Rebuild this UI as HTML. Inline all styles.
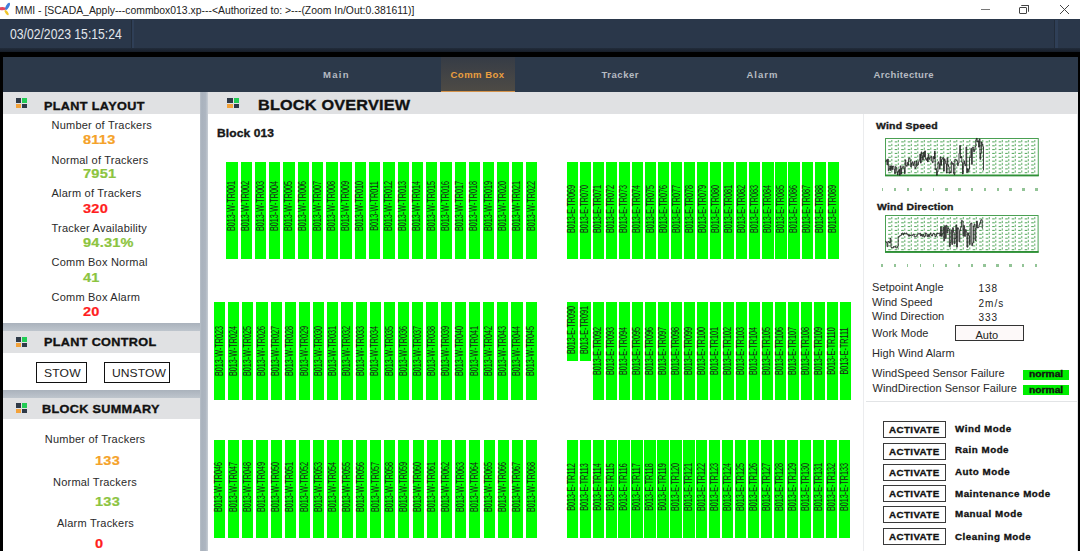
<!DOCTYPE html>
<html><head><meta charset="utf-8">
<style>
*{margin:0;padding:0;box-sizing:border-box}
html,body{width:1080px;height:551px;overflow:hidden;background:#fff;font-family:"Liberation Sans",sans-serif}
.a{position:absolute;display:block}
.bar{position:absolute;background:#00ff00}
.lab{position:absolute;width:0;height:0}
.lab span{position:absolute;left:-40px;top:-5px;width:80px;height:10px;font-size:10px;line-height:10px;text-align:center;color:#1a1a1a;transform:rotate(-90deg) scaleX(.72);white-space:nowrap}
.hdr{position:absolute;background:#e0e1e3}
.t{position:absolute;white-space:nowrap;line-height:1}
.lbl{font-size:11px;color:#2a2a2a;letter-spacing:.22px}
.val{font-size:13px;font-weight:bold;letter-spacing:.2px;transform:scaleX(1.12);transform-origin:0 0;-webkit-text-stroke:.2px currentColor}
.ttl{font-weight:bold;color:#111;-webkit-text-stroke:.35px #111}
.tab{font-size:9.5px;font-weight:bold;color:#b6bbc2}
.btn{position:absolute;border:1.3px solid #3a3a3a;background:#fff}
.act{font-size:8.5px;font-weight:bold;color:#111;letter-spacing:.35px;transform:scaleX(1.15);transform-origin:0 0;-webkit-text-stroke:.3px #111}
.mode{font-size:8.5px;font-weight:bold;color:#111;letter-spacing:.45px;transform:scaleX(1.15);transform-origin:0 0;-webkit-text-stroke:.3px #111}
.rp{font-size:11px;color:#2a2a2a;letter-spacing:.05px}
</style></head><body>

<div class="a" style="left:0;top:0;width:1080px;height:19px;background:#fff"></div>
<svg class="a" style="left:0;top:0" width="12" height="19" viewBox="0 0 12 19">
<ellipse cx="2.6" cy="8.6" rx="3.6" ry="1.7" fill="#e5485e"/>
<ellipse cx="7.6" cy="6.3" rx="1.6" ry="3.9" transform="rotate(28 7.6 6.3)" fill="#3f7fdc"/>
<ellipse cx="6.6" cy="12.6" rx="1.3" ry="3.1" transform="rotate(-35 6.6 12.6)" fill="#f0c52a"/>
</svg>
<div class="t" style="left:15px;top:5.5px;font-size:10.4px;color:#222">MMI - [SCADA_Apply---commbox013.xp---&lt;Authorized to: &gt;---(Zoom In/Out:0.381611)]</div>
<div class="a" style="left:981px;top:9px;width:9px;height:1px;background:#777"></div>
<div class="a" style="left:1019px;top:7px;width:8px;height:7px;border:1px solid #444;border-radius:1px"></div>
<div class="a" style="left:1021px;top:5px;width:8px;height:7px;border-top:1px solid #444;border-right:1px solid #444;border-radius:1px"></div>
<svg class="a" style="left:1059px;top:4px" width="11" height="11" viewBox="0 0 11 11"><path d="M1,1 L10,10 M10,1 L1,10" stroke="#444" stroke-width="1"/></svg>
<div class="a" style="left:0;top:19px;width:1080px;height:29px;background:#2a374a"></div>
<div class="a" style="left:130.5px;top:19.5px;width:1px;height:28px;background:#222c3a"></div><div class="a" style="left:131.5px;top:19.5px;width:2.5px;height:28px;background:#2f3f57"></div>
<div class="a" style="left:1054px;top:19.5px;width:1px;height:28px;background:#222c3a"></div><div class="a" style="left:1055px;top:19.5px;width:2.5px;height:28px;background:#2f3f57"></div>
<div class="t" style="left:10px;top:27.3px;font-size:14px;color:#e2e6ec;transform:scaleX(.87);transform-origin:0 0">03/02/2023 15:15:24</div>
<div class="a" style="left:0;top:47.5px;width:1080px;height:4.5px;background:linear-gradient(#222c3b,#161d28)"></div>
<div class="a" style="left:0;top:52px;width:1080px;height:4.5px;background:#000"></div>
<div class="a" style="left:0;top:52px;width:3.1px;height:499px;background:#000"></div>
<div class="a" style="left:1077.5px;top:52px;width:2.5px;height:499px;background:#000"></div>
<div class="a" style="left:3px;top:56.5px;width:1074.5px;height:35px;background:#2c394a"></div>
<div class="a" style="left:441px;top:56.5px;width:74px;height:35px;background:linear-gradient(#363c46,#4e4b45)"></div>
<div class="a" style="left:441px;top:90.5px;width:74px;height:1px;background:#d4924a"></div>
<div class="t tab" style="left:323px;top:70px;letter-spacing:1.27px">Main</div>
<div class="t tab" style="left:450.5px;top:70px;color:#eb9f3f;letter-spacing:.49px">Comm Box</div>
<div class="t tab" style="left:601.5px;top:70px;letter-spacing:.53px">Tracker</div>
<div class="t tab" style="left:746.5px;top:70px;letter-spacing:1px">Alarm</div>
<div class="t tab" style="left:873.5px;top:70px;letter-spacing:.38px">Architecture</div>
<div class="a" style="left:3px;top:91.5px;width:205px;height:459.5px;background:#bcc3cb"></div>
<div class="hdr" style="left:3px;top:91.5px;width:197px;height:22px"></div>
<div class="a" style="left:3px;top:113.5px;width:197px;height:209px;background:#fff"></div>
<div class="a" style="left:16px;top:98px;width:11px;height:10px"><i class="a" style="left:0;top:0;width:5.0px;height:4.5px;background:#2f3a48"></i><i class="a" style="left:6.0px;top:0;width:5.0px;height:4.5px;background:#22cc55"></i><i class="a" style="left:0;top:5.5px;width:5.0px;height:4.5px;background:#f3a23a"></i><i class="a" style="left:6.0px;top:5.5px;width:5.0px;height:4.5px;background:#2f3a48"></i></div>
<div class="t ttl" style="left:43.5px;top:101px;font-size:11.5px;letter-spacing:.32px;transform:scaleX(1.1);transform-origin:0 0">PLANT LAYOUT</div>
<div class="t lbl" style="left:51.5px;top:120.0px">Number of Trackers</div>
<div class="t val" style="left:83px;top:133.0px;color:#f5a229">8113</div>
<div class="t lbl" style="left:51.5px;top:154.5px">Normal of Trackers</div>
<div class="t val" style="left:83px;top:167.0px;color:#8cc440">7951</div>
<div class="t lbl" style="left:51.5px;top:188.1px">Alarm of Trackers</div>
<div class="t val" style="left:83px;top:201.7px;color:#ff1e1e">320</div>
<div class="t lbl" style="left:51.5px;top:222.6px">Tracker Availability</div>
<div class="t val" style="left:83px;top:236.3px;color:#8cc440">94.31%</div>
<div class="t lbl" style="left:51.5px;top:257.0px">Comm Box Normal</div>
<div class="t val" style="left:83px;top:270.9px;color:#8cc440">41</div>
<div class="t lbl" style="left:51.5px;top:291.5px">Comm Box Alarm</div>
<div class="t val" style="left:83px;top:305.2px;color:#ff1e1e">20</div>
<div class="a" style="left:3px;top:322.5px;width:197px;height:8px;background:linear-gradient(#aab2bc,#bec5cd)"></div>
<div class="a" style="left:3px;top:389.5px;width:197px;height:8px;background:linear-gradient(#aab2bc,#bec5cd)"></div>
<div class="hdr" style="left:3px;top:330.5px;width:197px;height:22px"></div>
<div class="a" style="left:3px;top:352.5px;width:197px;height:37px;background:#fff"></div>
<div class="a" style="left:16px;top:337px;width:11px;height:10px"><i class="a" style="left:0;top:0;width:5.0px;height:4.5px;background:#2f3a48"></i><i class="a" style="left:6.0px;top:0;width:5.0px;height:4.5px;background:#22cc55"></i><i class="a" style="left:0;top:5.5px;width:5.0px;height:4.5px;background:#f3a23a"></i><i class="a" style="left:6.0px;top:5.5px;width:5.0px;height:4.5px;background:#2f3a48"></i></div>
<div class="t ttl" style="left:43.5px;top:337px;font-size:11.5px;letter-spacing:.3px;transform:scaleX(1.1);transform-origin:0 0">PLANT CONTROL</div>
<div class="btn" style="left:35.5px;top:362.3px;width:51.4px;height:20.8px;border:1.8px solid #111"></div>
<div class="t" style="left:44px;top:368px;font-size:11px;color:#222;letter-spacing:.15px;transform:scaleX(1.1);transform-origin:0 0">STOW</div>
<div class="btn" style="left:104px;top:362.3px;width:66px;height:20.8px;border:1.8px solid #111"></div>
<div class="t" style="left:111.5px;top:368px;font-size:11px;color:#222;letter-spacing:.05px;transform:scaleX(1.1);transform-origin:0 0">UNSTOW</div>
<div class="hdr" style="left:3px;top:397.5px;width:197px;height:21.5px"></div>
<div class="a" style="left:3px;top:419px;width:197px;height:132px;background:#fff"></div>
<div class="a" style="left:16px;top:403px;width:11px;height:10px"><i class="a" style="left:0;top:0;width:5.0px;height:4.5px;background:#2f3a48"></i><i class="a" style="left:6.0px;top:0;width:5.0px;height:4.5px;background:#22cc55"></i><i class="a" style="left:0;top:5.5px;width:5.0px;height:4.5px;background:#f3a23a"></i><i class="a" style="left:6.0px;top:5.5px;width:5.0px;height:4.5px;background:#2f3a48"></i></div>
<div class="t ttl" style="left:41.5px;top:404px;font-size:11.5px;letter-spacing:.3px;transform:scaleX(1.1);transform-origin:0 0">BLOCK SUMMARY</div>
<div class="t lbl" style="left:44.8px;top:434.3px">Number of Trackers</div>
<div class="t val" style="left:95px;top:453.7px;color:#f5a229">133</div>
<div class="t lbl" style="left:53px;top:477px">Normal Trackers</div>
<div class="t val" style="left:95px;top:495.3px;color:#8cc440">133</div>
<div class="t lbl" style="left:57px;top:517.5px">Alarm Trackers</div>
<div class="t val" style="left:95.3px;top:537px;color:#ff1e1e">0</div>
<div class="a" style="left:200px;top:91.5px;width:8px;height:459.5px;background:linear-gradient(90deg,#b9c0c9,#a9b2bd 22%,#aeb6c1 70%,#c8ced5)"></div>
<div class="hdr" style="left:208px;top:91.5px;width:869.5px;height:22.3px"></div>
<div class="a" style="left:227px;top:98px;width:12px;height:10px"><i class="a" style="left:0;top:0;width:5.5px;height:4.5px;background:#2f3a48"></i><i class="a" style="left:6.5px;top:0;width:5.5px;height:4.5px;background:#22cc55"></i><i class="a" style="left:0;top:5.5px;width:5.5px;height:4.5px;background:#f3a23a"></i><i class="a" style="left:6.5px;top:5.5px;width:5.5px;height:4.5px;background:#2f3a48"></i></div>
<div class="t ttl" style="left:258px;top:97px;font-size:15.3px;letter-spacing:.2px;transform:scaleX(1.06);transform-origin:0 0">BLOCK OVERVIEW</div>
<div class="t ttl" style="left:216.7px;top:128.3px;font-size:11.8px;color:#1a1a1a;transform:scaleX(1.02);transform-origin:0 0;letter-spacing:.1px">Block 013</div>
<div class="bar" style="left:226.40px;top:161.60px;width:11.30px;height:97.70px"></div>
<div class="lab" style="left:232.05px;top:205.90px"><span>B013-W-TR001</span></div>
<div class="bar" style="left:240.66px;top:161.60px;width:11.30px;height:97.70px"></div>
<div class="lab" style="left:246.31px;top:205.90px"><span>B013-W-TR002</span></div>
<div class="bar" style="left:254.92px;top:161.60px;width:11.30px;height:97.70px"></div>
<div class="lab" style="left:260.57px;top:205.90px"><span>B013-W-TR003</span></div>
<div class="bar" style="left:269.18px;top:161.60px;width:11.30px;height:97.70px"></div>
<div class="lab" style="left:274.83px;top:205.90px"><span>B013-W-TR004</span></div>
<div class="bar" style="left:283.44px;top:161.60px;width:11.30px;height:97.70px"></div>
<div class="lab" style="left:289.09px;top:205.90px"><span>B013-W-TR005</span></div>
<div class="bar" style="left:297.70px;top:161.60px;width:11.30px;height:97.70px"></div>
<div class="lab" style="left:303.35px;top:205.90px"><span>B013-W-TR006</span></div>
<div class="bar" style="left:311.96px;top:161.60px;width:11.30px;height:97.70px"></div>
<div class="lab" style="left:317.61px;top:205.90px"><span>B013-W-TR007</span></div>
<div class="bar" style="left:326.22px;top:161.60px;width:11.30px;height:97.70px"></div>
<div class="lab" style="left:331.87px;top:205.90px"><span>B013-W-TR008</span></div>
<div class="bar" style="left:340.48px;top:161.60px;width:11.30px;height:97.70px"></div>
<div class="lab" style="left:346.13px;top:205.90px"><span>B013-W-TR009</span></div>
<div class="bar" style="left:354.74px;top:161.60px;width:11.30px;height:97.70px"></div>
<div class="lab" style="left:360.39px;top:205.90px"><span>B013-W-TR010</span></div>
<div class="bar" style="left:369.00px;top:161.60px;width:11.30px;height:97.70px"></div>
<div class="lab" style="left:374.65px;top:205.90px"><span>B013-W-TR011</span></div>
<div class="bar" style="left:383.26px;top:161.60px;width:11.30px;height:97.70px"></div>
<div class="lab" style="left:388.91px;top:205.90px"><span>B013-W-TR012</span></div>
<div class="bar" style="left:397.52px;top:161.60px;width:11.30px;height:97.70px"></div>
<div class="lab" style="left:403.17px;top:205.90px"><span>B013-W-TR013</span></div>
<div class="bar" style="left:411.78px;top:161.60px;width:11.30px;height:97.70px"></div>
<div class="lab" style="left:417.43px;top:205.90px"><span>B013-W-TR014</span></div>
<div class="bar" style="left:426.04px;top:161.60px;width:11.30px;height:97.70px"></div>
<div class="lab" style="left:431.69px;top:205.90px"><span>B013-W-TR015</span></div>
<div class="bar" style="left:440.30px;top:161.60px;width:11.30px;height:97.70px"></div>
<div class="lab" style="left:445.95px;top:205.90px"><span>B013-W-TR016</span></div>
<div class="bar" style="left:454.56px;top:161.60px;width:11.30px;height:97.70px"></div>
<div class="lab" style="left:460.21px;top:205.90px"><span>B013-W-TR017</span></div>
<div class="bar" style="left:468.82px;top:161.60px;width:11.30px;height:97.70px"></div>
<div class="lab" style="left:474.47px;top:205.90px"><span>B013-W-TR018</span></div>
<div class="bar" style="left:483.08px;top:161.60px;width:11.30px;height:97.70px"></div>
<div class="lab" style="left:488.73px;top:205.90px"><span>B013-W-TR019</span></div>
<div class="bar" style="left:497.34px;top:161.60px;width:11.30px;height:97.70px"></div>
<div class="lab" style="left:502.99px;top:205.90px"><span>B013-W-TR020</span></div>
<div class="bar" style="left:511.60px;top:161.60px;width:11.30px;height:97.70px"></div>
<div class="lab" style="left:517.25px;top:205.90px"><span>B013-W-TR021</span></div>
<div class="bar" style="left:525.86px;top:161.60px;width:11.30px;height:97.70px"></div>
<div class="lab" style="left:531.51px;top:205.90px"><span>B013-W-TR022</span></div>
<div class="bar" style="left:566.60px;top:161.60px;width:11.20px;height:97.70px"></div>
<div class="lab" style="left:572.20px;top:209.20px"><span>B013-E-TR069</span></div>
<div class="bar" style="left:579.65px;top:161.60px;width:11.20px;height:97.70px"></div>
<div class="lab" style="left:585.25px;top:209.20px"><span>B013-E-TR070</span></div>
<div class="bar" style="left:592.70px;top:161.60px;width:11.20px;height:97.70px"></div>
<div class="lab" style="left:598.30px;top:209.20px"><span>B013-E-TR071</span></div>
<div class="bar" style="left:605.75px;top:161.60px;width:11.20px;height:97.70px"></div>
<div class="lab" style="left:611.35px;top:209.20px"><span>B013-E-TR072</span></div>
<div class="bar" style="left:618.80px;top:161.60px;width:11.20px;height:97.70px"></div>
<div class="lab" style="left:624.40px;top:209.20px"><span>B013-E-TR073</span></div>
<div class="bar" style="left:631.85px;top:161.60px;width:11.20px;height:97.70px"></div>
<div class="lab" style="left:637.45px;top:209.20px"><span>B013-E-TR074</span></div>
<div class="bar" style="left:644.90px;top:161.60px;width:11.20px;height:97.70px"></div>
<div class="lab" style="left:650.50px;top:209.20px"><span>B013-E-TR075</span></div>
<div class="bar" style="left:657.95px;top:161.60px;width:11.20px;height:97.70px"></div>
<div class="lab" style="left:663.55px;top:209.20px"><span>B013-E-TR076</span></div>
<div class="bar" style="left:671.00px;top:161.60px;width:11.20px;height:97.70px"></div>
<div class="lab" style="left:676.60px;top:209.20px"><span>B013-E-TR077</span></div>
<div class="bar" style="left:684.05px;top:161.60px;width:11.20px;height:97.70px"></div>
<div class="lab" style="left:689.65px;top:209.20px"><span>B013-E-TR078</span></div>
<div class="bar" style="left:697.10px;top:161.60px;width:11.20px;height:97.70px"></div>
<div class="lab" style="left:702.70px;top:209.20px"><span>B013-E-TR079</span></div>
<div class="bar" style="left:710.15px;top:161.60px;width:11.20px;height:97.70px"></div>
<div class="lab" style="left:715.75px;top:209.20px"><span>B013-E-TR080</span></div>
<div class="bar" style="left:723.20px;top:161.60px;width:11.20px;height:97.70px"></div>
<div class="lab" style="left:728.80px;top:209.20px"><span>B013-E-TR081</span></div>
<div class="bar" style="left:736.25px;top:161.60px;width:11.20px;height:97.70px"></div>
<div class="lab" style="left:741.85px;top:209.20px"><span>B013-E-TR082</span></div>
<div class="bar" style="left:749.30px;top:161.60px;width:11.20px;height:97.70px"></div>
<div class="lab" style="left:754.90px;top:209.20px"><span>B013-E-TR083</span></div>
<div class="bar" style="left:762.35px;top:161.60px;width:11.20px;height:97.70px"></div>
<div class="lab" style="left:767.95px;top:209.20px"><span>B013-E-TR084</span></div>
<div class="bar" style="left:775.40px;top:161.60px;width:11.20px;height:97.70px"></div>
<div class="lab" style="left:781.00px;top:209.20px"><span>B013-E-TR085</span></div>
<div class="bar" style="left:788.45px;top:161.60px;width:11.20px;height:97.70px"></div>
<div class="lab" style="left:794.05px;top:209.20px"><span>B013-E-TR086</span></div>
<div class="bar" style="left:801.50px;top:161.60px;width:11.20px;height:97.70px"></div>
<div class="lab" style="left:807.10px;top:209.20px"><span>B013-E-TR087</span></div>
<div class="bar" style="left:814.55px;top:161.60px;width:11.20px;height:97.70px"></div>
<div class="lab" style="left:820.15px;top:209.20px"><span>B013-E-TR088</span></div>
<div class="bar" style="left:827.60px;top:161.60px;width:11.20px;height:97.70px"></div>
<div class="lab" style="left:833.20px;top:209.20px"><span>B013-E-TR089</span></div>
<div class="bar" style="left:213.90px;top:301.90px;width:11.20px;height:98.20px"></div>
<div class="lab" style="left:219.50px;top:350.50px"><span>B013-W-TR023</span></div>
<div class="bar" style="left:228.07px;top:301.90px;width:11.20px;height:98.20px"></div>
<div class="lab" style="left:233.67px;top:350.50px"><span>B013-W-TR024</span></div>
<div class="bar" style="left:242.24px;top:301.90px;width:11.20px;height:98.20px"></div>
<div class="lab" style="left:247.84px;top:350.50px"><span>B013-W-TR025</span></div>
<div class="bar" style="left:256.41px;top:301.90px;width:11.20px;height:98.20px"></div>
<div class="lab" style="left:262.01px;top:350.50px"><span>B013-W-TR026</span></div>
<div class="bar" style="left:270.58px;top:301.90px;width:11.20px;height:98.20px"></div>
<div class="lab" style="left:276.18px;top:350.50px"><span>B013-W-TR027</span></div>
<div class="bar" style="left:284.75px;top:301.90px;width:11.20px;height:98.20px"></div>
<div class="lab" style="left:290.35px;top:350.50px"><span>B013-W-TR028</span></div>
<div class="bar" style="left:298.92px;top:301.90px;width:11.20px;height:98.20px"></div>
<div class="lab" style="left:304.52px;top:350.50px"><span>B013-W-TR029</span></div>
<div class="bar" style="left:313.09px;top:301.90px;width:11.20px;height:98.20px"></div>
<div class="lab" style="left:318.69px;top:350.50px"><span>B013-W-TR030</span></div>
<div class="bar" style="left:327.26px;top:301.90px;width:11.20px;height:98.20px"></div>
<div class="lab" style="left:332.86px;top:350.50px"><span>B013-W-TR031</span></div>
<div class="bar" style="left:341.43px;top:301.90px;width:11.20px;height:98.20px"></div>
<div class="lab" style="left:347.03px;top:350.50px"><span>B013-W-TR032</span></div>
<div class="bar" style="left:355.60px;top:301.90px;width:11.20px;height:98.20px"></div>
<div class="lab" style="left:361.20px;top:350.50px"><span>B013-W-TR033</span></div>
<div class="bar" style="left:369.77px;top:301.90px;width:11.20px;height:98.20px"></div>
<div class="lab" style="left:375.37px;top:350.50px"><span>B013-W-TR034</span></div>
<div class="bar" style="left:383.94px;top:301.90px;width:11.20px;height:98.20px"></div>
<div class="lab" style="left:389.54px;top:350.50px"><span>B013-W-TR035</span></div>
<div class="bar" style="left:398.11px;top:301.90px;width:11.20px;height:98.20px"></div>
<div class="lab" style="left:403.71px;top:350.50px"><span>B013-W-TR036</span></div>
<div class="bar" style="left:412.28px;top:301.90px;width:11.20px;height:98.20px"></div>
<div class="lab" style="left:417.88px;top:350.50px"><span>B013-W-TR037</span></div>
<div class="bar" style="left:426.45px;top:301.90px;width:11.20px;height:98.20px"></div>
<div class="lab" style="left:432.05px;top:350.50px"><span>B013-W-TR038</span></div>
<div class="bar" style="left:440.62px;top:301.90px;width:11.20px;height:98.20px"></div>
<div class="lab" style="left:446.22px;top:350.50px"><span>B013-W-TR039</span></div>
<div class="bar" style="left:454.79px;top:301.90px;width:11.20px;height:98.20px"></div>
<div class="lab" style="left:460.39px;top:350.50px"><span>B013-W-TR040</span></div>
<div class="bar" style="left:468.96px;top:301.90px;width:11.20px;height:98.20px"></div>
<div class="lab" style="left:474.56px;top:350.50px"><span>B013-W-TR041</span></div>
<div class="bar" style="left:483.13px;top:301.90px;width:11.20px;height:98.20px"></div>
<div class="lab" style="left:488.73px;top:350.50px"><span>B013-W-TR042</span></div>
<div class="bar" style="left:497.30px;top:301.90px;width:11.20px;height:98.20px"></div>
<div class="lab" style="left:502.90px;top:350.50px"><span>B013-W-TR043</span></div>
<div class="bar" style="left:511.47px;top:301.90px;width:11.20px;height:98.20px"></div>
<div class="lab" style="left:517.07px;top:350.50px"><span>B013-W-TR044</span></div>
<div class="bar" style="left:525.64px;top:301.90px;width:11.20px;height:98.20px"></div>
<div class="lab" style="left:531.24px;top:350.50px"><span>B013-W-TR045</span></div>
<div class="bar" style="left:566.80px;top:301.90px;width:11.30px;height:59.10px"></div>
<div class="lab" style="left:572.45px;top:330.30px"><span>B013-E-TR090</span></div>
<div class="bar" style="left:579.79px;top:301.90px;width:11.30px;height:59.10px"></div>
<div class="lab" style="left:585.44px;top:330.30px"><span>B013-E-TR091</span></div>
<div class="bar" style="left:592.78px;top:301.90px;width:11.30px;height:98.20px"></div>
<div class="lab" style="left:598.43px;top:350.50px"><span>B013-E-TR092</span></div>
<div class="bar" style="left:605.77px;top:301.90px;width:11.30px;height:98.20px"></div>
<div class="lab" style="left:611.42px;top:350.50px"><span>B013-E-TR093</span></div>
<div class="bar" style="left:618.76px;top:301.90px;width:11.30px;height:98.20px"></div>
<div class="lab" style="left:624.41px;top:350.50px"><span>B013-E-TR094</span></div>
<div class="bar" style="left:631.75px;top:301.90px;width:11.30px;height:98.20px"></div>
<div class="lab" style="left:637.40px;top:350.50px"><span>B013-E-TR095</span></div>
<div class="bar" style="left:644.74px;top:301.90px;width:11.30px;height:98.20px"></div>
<div class="lab" style="left:650.39px;top:350.50px"><span>B013-E-TR096</span></div>
<div class="bar" style="left:657.73px;top:301.90px;width:11.30px;height:98.20px"></div>
<div class="lab" style="left:663.38px;top:350.50px"><span>B013-E-TR097</span></div>
<div class="bar" style="left:670.72px;top:301.90px;width:11.30px;height:98.20px"></div>
<div class="lab" style="left:676.37px;top:350.50px"><span>B013-E-TR098</span></div>
<div class="bar" style="left:683.71px;top:301.90px;width:11.30px;height:98.20px"></div>
<div class="lab" style="left:689.36px;top:350.50px"><span>B013-E-TR099</span></div>
<div class="bar" style="left:696.70px;top:301.90px;width:11.30px;height:98.20px"></div>
<div class="lab" style="left:702.35px;top:350.50px"><span>B013-E-TR100</span></div>
<div class="bar" style="left:709.69px;top:301.90px;width:11.30px;height:98.20px"></div>
<div class="lab" style="left:715.34px;top:350.50px"><span>B013-E-TR101</span></div>
<div class="bar" style="left:722.68px;top:301.90px;width:11.30px;height:98.20px"></div>
<div class="lab" style="left:728.33px;top:350.50px"><span>B013-E-TR102</span></div>
<div class="bar" style="left:735.67px;top:301.90px;width:11.30px;height:98.20px"></div>
<div class="lab" style="left:741.32px;top:350.50px"><span>B013-E-TR103</span></div>
<div class="bar" style="left:748.66px;top:301.90px;width:11.30px;height:98.20px"></div>
<div class="lab" style="left:754.31px;top:350.50px"><span>B013-E-TR104</span></div>
<div class="bar" style="left:761.65px;top:301.90px;width:11.30px;height:98.20px"></div>
<div class="lab" style="left:767.30px;top:350.50px"><span>B013-E-TR105</span></div>
<div class="bar" style="left:774.64px;top:301.90px;width:11.30px;height:98.20px"></div>
<div class="lab" style="left:780.29px;top:350.50px"><span>B013-E-TR106</span></div>
<div class="bar" style="left:787.63px;top:301.90px;width:11.30px;height:98.20px"></div>
<div class="lab" style="left:793.28px;top:350.50px"><span>B013-E-TR107</span></div>
<div class="bar" style="left:800.62px;top:301.90px;width:11.30px;height:98.20px"></div>
<div class="lab" style="left:806.27px;top:350.50px"><span>B013-E-TR108</span></div>
<div class="bar" style="left:813.61px;top:301.90px;width:11.30px;height:98.20px"></div>
<div class="lab" style="left:819.26px;top:350.50px"><span>B013-E-TR109</span></div>
<div class="bar" style="left:826.60px;top:301.90px;width:11.30px;height:98.20px"></div>
<div class="lab" style="left:832.25px;top:350.50px"><span>B013-E-TR110</span></div>
<div class="bar" style="left:839.59px;top:301.90px;width:11.30px;height:98.20px"></div>
<div class="lab" style="left:845.24px;top:350.50px"><span>B013-E-TR111</span></div>
<div class="bar" style="left:213.90px;top:440.30px;width:11.10px;height:97.80px"></div>
<div class="lab" style="left:219.45px;top:486.70px"><span>B013-W-TR046</span></div>
<div class="bar" style="left:228.09px;top:440.30px;width:11.10px;height:97.80px"></div>
<div class="lab" style="left:233.64px;top:486.70px"><span>B013-W-TR047</span></div>
<div class="bar" style="left:242.28px;top:440.30px;width:11.10px;height:97.80px"></div>
<div class="lab" style="left:247.83px;top:486.70px"><span>B013-W-TR048</span></div>
<div class="bar" style="left:256.47px;top:440.30px;width:11.10px;height:97.80px"></div>
<div class="lab" style="left:262.02px;top:486.70px"><span>B013-W-TR049</span></div>
<div class="bar" style="left:270.66px;top:440.30px;width:11.10px;height:97.80px"></div>
<div class="lab" style="left:276.21px;top:486.70px"><span>B013-W-TR050</span></div>
<div class="bar" style="left:284.85px;top:440.30px;width:11.10px;height:97.80px"></div>
<div class="lab" style="left:290.40px;top:486.70px"><span>B013-W-TR051</span></div>
<div class="bar" style="left:299.04px;top:440.30px;width:11.10px;height:97.80px"></div>
<div class="lab" style="left:304.59px;top:486.70px"><span>B013-W-TR052</span></div>
<div class="bar" style="left:313.23px;top:440.30px;width:11.10px;height:97.80px"></div>
<div class="lab" style="left:318.78px;top:486.70px"><span>B013-W-TR053</span></div>
<div class="bar" style="left:327.42px;top:440.30px;width:11.10px;height:97.80px"></div>
<div class="lab" style="left:332.97px;top:486.70px"><span>B013-W-TR054</span></div>
<div class="bar" style="left:341.61px;top:440.30px;width:11.10px;height:97.80px"></div>
<div class="lab" style="left:347.16px;top:486.70px"><span>B013-W-TR055</span></div>
<div class="bar" style="left:355.80px;top:440.30px;width:11.10px;height:97.80px"></div>
<div class="lab" style="left:361.35px;top:486.70px"><span>B013-W-TR056</span></div>
<div class="bar" style="left:369.99px;top:440.30px;width:11.10px;height:97.80px"></div>
<div class="lab" style="left:375.54px;top:486.70px"><span>B013-W-TR057</span></div>
<div class="bar" style="left:384.18px;top:440.30px;width:11.10px;height:97.80px"></div>
<div class="lab" style="left:389.73px;top:486.70px"><span>B013-W-TR058</span></div>
<div class="bar" style="left:398.37px;top:440.30px;width:11.10px;height:97.80px"></div>
<div class="lab" style="left:403.92px;top:486.70px"><span>B013-W-TR059</span></div>
<div class="bar" style="left:412.56px;top:440.30px;width:11.10px;height:97.80px"></div>
<div class="lab" style="left:418.11px;top:486.70px"><span>B013-W-TR060</span></div>
<div class="bar" style="left:426.75px;top:440.30px;width:11.10px;height:97.80px"></div>
<div class="lab" style="left:432.30px;top:486.70px"><span>B013-W-TR061</span></div>
<div class="bar" style="left:440.94px;top:440.30px;width:11.10px;height:97.80px"></div>
<div class="lab" style="left:446.49px;top:486.70px"><span>B013-W-TR062</span></div>
<div class="bar" style="left:455.13px;top:440.30px;width:11.10px;height:97.80px"></div>
<div class="lab" style="left:460.68px;top:486.70px"><span>B013-W-TR063</span></div>
<div class="bar" style="left:469.32px;top:440.30px;width:11.10px;height:97.80px"></div>
<div class="lab" style="left:474.87px;top:486.70px"><span>B013-W-TR064</span></div>
<div class="bar" style="left:483.51px;top:440.30px;width:11.10px;height:97.80px"></div>
<div class="lab" style="left:489.06px;top:486.70px"><span>B013-W-TR065</span></div>
<div class="bar" style="left:497.70px;top:440.30px;width:11.10px;height:97.80px"></div>
<div class="lab" style="left:503.25px;top:486.70px"><span>B013-W-TR066</span></div>
<div class="bar" style="left:511.89px;top:440.30px;width:11.10px;height:97.80px"></div>
<div class="lab" style="left:517.44px;top:486.70px"><span>B013-W-TR067</span></div>
<div class="bar" style="left:526.08px;top:440.30px;width:11.10px;height:97.80px"></div>
<div class="lab" style="left:531.63px;top:486.70px"><span>B013-W-TR068</span></div>
<div class="bar" style="left:566.60px;top:440.40px;width:11.20px;height:97.70px"></div>
<div class="lab" style="left:572.20px;top:486.50px"><span>B013-E-TR112</span></div>
<div class="bar" style="left:579.57px;top:440.40px;width:11.20px;height:97.70px"></div>
<div class="lab" style="left:585.17px;top:486.50px"><span>B013-E-TR113</span></div>
<div class="bar" style="left:592.54px;top:440.40px;width:11.20px;height:97.70px"></div>
<div class="lab" style="left:598.14px;top:486.50px"><span>B013-E-TR114</span></div>
<div class="bar" style="left:605.51px;top:440.40px;width:11.20px;height:97.70px"></div>
<div class="lab" style="left:611.11px;top:486.50px"><span>B013-E-TR115</span></div>
<div class="bar" style="left:618.48px;top:440.40px;width:11.20px;height:97.70px"></div>
<div class="lab" style="left:624.08px;top:486.50px"><span>B013-E-TR116</span></div>
<div class="bar" style="left:631.45px;top:440.40px;width:11.20px;height:97.70px"></div>
<div class="lab" style="left:637.05px;top:486.50px"><span>B013-E-TR117</span></div>
<div class="bar" style="left:644.42px;top:440.40px;width:11.20px;height:97.70px"></div>
<div class="lab" style="left:650.02px;top:486.50px"><span>B013-E-TR118</span></div>
<div class="bar" style="left:657.39px;top:440.40px;width:11.20px;height:97.70px"></div>
<div class="lab" style="left:662.99px;top:486.50px"><span>B013-E-TR119</span></div>
<div class="bar" style="left:670.36px;top:440.40px;width:11.20px;height:97.70px"></div>
<div class="lab" style="left:675.96px;top:486.50px"><span>B013-E-TR120</span></div>
<div class="bar" style="left:683.33px;top:440.40px;width:11.20px;height:97.70px"></div>
<div class="lab" style="left:688.93px;top:486.50px"><span>B013-E-TR121</span></div>
<div class="bar" style="left:696.30px;top:440.40px;width:11.20px;height:97.70px"></div>
<div class="lab" style="left:701.90px;top:486.50px"><span>B013-E-TR122</span></div>
<div class="bar" style="left:709.27px;top:440.40px;width:11.20px;height:97.70px"></div>
<div class="lab" style="left:714.87px;top:486.50px"><span>B013-E-TR123</span></div>
<div class="bar" style="left:722.24px;top:440.40px;width:11.20px;height:97.70px"></div>
<div class="lab" style="left:727.84px;top:486.50px"><span>B013-E-TR124</span></div>
<div class="bar" style="left:735.21px;top:440.40px;width:11.20px;height:97.70px"></div>
<div class="lab" style="left:740.81px;top:486.50px"><span>B013-E-TR125</span></div>
<div class="bar" style="left:748.18px;top:440.40px;width:11.20px;height:97.70px"></div>
<div class="lab" style="left:753.78px;top:486.50px"><span>B013-E-TR126</span></div>
<div class="bar" style="left:761.15px;top:440.40px;width:11.20px;height:97.70px"></div>
<div class="lab" style="left:766.75px;top:486.50px"><span>B013-E-TR127</span></div>
<div class="bar" style="left:774.12px;top:440.40px;width:11.20px;height:97.70px"></div>
<div class="lab" style="left:779.72px;top:486.50px"><span>B013-E-TR128</span></div>
<div class="bar" style="left:787.09px;top:440.40px;width:11.20px;height:97.70px"></div>
<div class="lab" style="left:792.69px;top:486.50px"><span>B013-E-TR129</span></div>
<div class="bar" style="left:800.06px;top:440.40px;width:11.20px;height:97.70px"></div>
<div class="lab" style="left:805.66px;top:486.50px"><span>B013-E-TR130</span></div>
<div class="bar" style="left:813.03px;top:440.40px;width:11.20px;height:97.70px"></div>
<div class="lab" style="left:818.63px;top:486.50px"><span>B013-E-TR131</span></div>
<div class="bar" style="left:826.00px;top:440.40px;width:11.20px;height:97.70px"></div>
<div class="lab" style="left:831.60px;top:486.50px"><span>B013-E-TR132</span></div>
<div class="bar" style="left:838.97px;top:440.40px;width:11.20px;height:97.70px"></div>
<div class="lab" style="left:844.57px;top:486.50px"><span>B013-E-TR133</span></div>
<div class="a" style="left:863px;top:113.8px;width:1px;height:437.2px;background:#ebecee"></div>
<div class="a" style="left:1077px;top:114px;width:1px;height:437px;background:#e4e6e8"></div>
<div class="t ttl" style="left:876px;top:121px;font-size:9.5px;color:#222;transform:scaleX(1.1);transform-origin:0 0;letter-spacing:.2px">Wind Speed</div>
<svg class="a" style="left:885px;top:137.6px;overflow:visible" width="153.8" height="38.2" viewBox="0 0 153.8 38.2">
<line x1="2" y1="3.9" x2="151.8" y2="3.9" stroke="#4ea556" stroke-width="1" stroke-dasharray="2.6 3.9" stroke-dashoffset="-1.2"/>
<line x1="2" y1="7.8" x2="151.8" y2="7.8" stroke="#4ea556" stroke-width="1" stroke-dasharray="2.6 3.9" stroke-dashoffset="-1.2"/>
<line x1="2" y1="11.6" x2="151.8" y2="11.6" stroke="#4ea556" stroke-width="1" stroke-dasharray="2.6 3.9" stroke-dashoffset="-1.2"/>
<line x1="2" y1="15.4" x2="151.8" y2="15.4" stroke="#4ea556" stroke-width="1" stroke-dasharray="2.6 3.9" stroke-dashoffset="-1.2"/>
<line x1="2" y1="19.3" x2="151.8" y2="19.3" stroke="#4ea556" stroke-width="1" stroke-dasharray="2.6 3.9" stroke-dashoffset="-1.2"/>
<line x1="2" y1="23.2" x2="151.8" y2="23.2" stroke="#4ea556" stroke-width="1" stroke-dasharray="2.6 3.9" stroke-dashoffset="-1.2"/>
<line x1="2" y1="27.0" x2="151.8" y2="27.0" stroke="#4ea556" stroke-width="1" stroke-dasharray="2.6 3.9" stroke-dashoffset="-1.2"/>
<line x1="2" y1="30.9" x2="151.8" y2="30.9" stroke="#4ea556" stroke-width="1" stroke-dasharray="2.6 3.9" stroke-dashoffset="-1.2"/>
<line x1="2" y1="34.7" x2="151.8" y2="34.7" stroke="#4ea556" stroke-width="1" stroke-dasharray="2.6 3.9" stroke-dashoffset="-1.2"/>
<line x1="6.8" y1="2" x2="6.8" y2="36.2" stroke="#4ea556" stroke-width="0.9" stroke-dasharray="2.2 1.6"/>
<line x1="13.3" y1="2" x2="13.3" y2="36.2" stroke="#4ea556" stroke-width="0.9" stroke-dasharray="2.2 1.6"/>
<line x1="19.8" y1="2" x2="19.8" y2="36.2" stroke="#4ea556" stroke-width="0.9" stroke-dasharray="2.2 1.6"/>
<line x1="26.3" y1="2" x2="26.3" y2="36.2" stroke="#4ea556" stroke-width="0.9" stroke-dasharray="2.2 1.6"/>
<line x1="32.8" y1="2" x2="32.8" y2="36.2" stroke="#4ea556" stroke-width="0.9" stroke-dasharray="2.2 1.6"/>
<line x1="39.3" y1="2" x2="39.3" y2="36.2" stroke="#4ea556" stroke-width="0.9" stroke-dasharray="2.2 1.6"/>
<line x1="45.8" y1="2" x2="45.8" y2="36.2" stroke="#4ea556" stroke-width="0.9" stroke-dasharray="2.2 1.6"/>
<line x1="52.3" y1="2" x2="52.3" y2="36.2" stroke="#4ea556" stroke-width="0.9" stroke-dasharray="2.2 1.6"/>
<line x1="58.8" y1="2" x2="58.8" y2="36.2" stroke="#4ea556" stroke-width="0.9" stroke-dasharray="2.2 1.6"/>
<line x1="65.3" y1="2" x2="65.3" y2="36.2" stroke="#4ea556" stroke-width="0.9" stroke-dasharray="2.2 1.6"/>
<line x1="71.8" y1="2" x2="71.8" y2="36.2" stroke="#4ea556" stroke-width="0.9" stroke-dasharray="2.2 1.6"/>
<line x1="78.3" y1="2" x2="78.3" y2="36.2" stroke="#4ea556" stroke-width="0.9" stroke-dasharray="2.2 1.6"/>
<line x1="84.8" y1="2" x2="84.8" y2="36.2" stroke="#4ea556" stroke-width="0.9" stroke-dasharray="2.2 1.6"/>
<line x1="91.3" y1="2" x2="91.3" y2="36.2" stroke="#4ea556" stroke-width="0.9" stroke-dasharray="2.2 1.6"/>
<line x1="97.8" y1="2" x2="97.8" y2="36.2" stroke="#4ea556" stroke-width="0.9" stroke-dasharray="2.2 1.6"/>
<line x1="104.3" y1="2" x2="104.3" y2="36.2" stroke="#4ea556" stroke-width="0.9" stroke-dasharray="2.2 1.6"/>
<line x1="110.8" y1="2" x2="110.8" y2="36.2" stroke="#4ea556" stroke-width="0.9" stroke-dasharray="2.2 1.6"/>
<line x1="117.3" y1="2" x2="117.3" y2="36.2" stroke="#4ea556" stroke-width="0.9" stroke-dasharray="2.2 1.6"/>
<line x1="123.8" y1="2" x2="123.8" y2="36.2" stroke="#4ea556" stroke-width="0.9" stroke-dasharray="2.2 1.6"/>
<line x1="130.3" y1="2" x2="130.3" y2="36.2" stroke="#4ea556" stroke-width="0.9" stroke-dasharray="2.2 1.6"/>
<line x1="136.8" y1="2" x2="136.8" y2="36.2" stroke="#4ea556" stroke-width="0.9" stroke-dasharray="2.2 1.6"/>
<line x1="143.3" y1="2" x2="143.3" y2="36.2" stroke="#4ea556" stroke-width="0.9" stroke-dasharray="2.2 1.6"/>
<line x1="149.8" y1="2" x2="149.8" y2="36.2" stroke="#4ea556" stroke-width="0.9" stroke-dasharray="2.2 1.6"/>
<rect x="0.5" y="0.5" width="152.8" height="37.2" fill="none" stroke="#4aa052" stroke-width="1"/>
<line x1="0" y1="37.300000000000004" x2="153.8" y2="37.300000000000004" stroke="#2f9037" stroke-width="1.8"/>
<polyline points="0.5,23.6 1.2,23.6 1.2,21.9 1.9,21.9 1.9,26.9 2.6,26.9 2.6,21.1 3.3,21.1 3.3,32.8 4.0,32.8 4.0,31.1 4.7,31.1 4.7,28.0 5.4,28.0 5.4,32.5 6.1,32.5 6.1,27.8 6.8,27.8 6.8,31.7 7.5,31.7 7.5,28.1 8.2,28.1 8.2,28.3 8.9,28.3 8.9,31.6 9.6,31.6 9.6,35.7 10.3,35.7 10.3,28.6 11.0,28.6 11.0,29.6 11.7,29.6 11.7,33.7 12.4,33.7 12.4,36.9 13.1,36.9 13.1,33.2 13.8,33.2 13.8,31.4 14.5,31.4 14.5,37.2 15.2,37.2 15.2,27.9 15.9,27.9 15.9,36.0 16.6,36.0 16.6,30.3 17.3,30.3 17.3,28.8 18.0,28.8 18.0,28.6 18.7,28.6 18.7,30.5 19.4,30.5 19.4,35.6 20.1,35.6 20.1,21.9 20.8,21.9 20.8,27.5 21.5,27.5 21.5,28.3 22.2,28.3 22.2,24.6 22.9,24.6 22.9,27.1 23.6,27.1 23.6,20.3 24.3,20.3 24.3,20.2 25.0,20.2 25.0,22.3 25.7,22.3 25.7,28.9 26.4,28.9 26.4,25.4 27.1,25.4 27.1,23.8 27.8,23.8 27.8,27.6 28.5,27.6 28.5,25.7 29.2,25.7 29.2,23.6 29.9,23.6 29.9,30.5 30.6,30.5 30.6,29.2 31.3,29.2 31.3,22.8 32.0,22.8 32.0,27.4 32.7,27.4 32.7,26.8 33.4,26.8 33.4,23.8 34.1,23.8 34.1,21.9 34.8,21.9 34.8,16.1 35.5,16.1 35.5,25.1 36.2,25.1 36.2,13.9 36.9,13.9 36.9,17.8 37.6,17.8 37.6,22.2 38.3,22.2 38.3,14.4 39.0,14.4 39.0,18.8 39.7,18.8 39.7,12.9 40.4,12.9 40.4,21.1 41.1,21.1 41.1,22.3 41.8,22.3 41.8,19.8 42.5,19.8 42.5,23.8 43.2,23.8 43.2,16.5 43.9,16.5 43.9,21.4 44.6,21.4 44.6,20.1 45.3,20.1 45.3,19.9 46.0,19.9 46.0,18.3 46.7,18.3 46.7,23.3 47.4,23.3 47.4,24.7 48.1,24.7 48.1,18.6 48.8,18.6 48.8,21.0 49.5,21.0 49.5,13.2 50.2,13.2 50.2,31.7 50.9,31.7 50.9,30.7 51.6,30.7 51.6,37.3 52.3,37.3 52.3,34.0 53.0,34.0 53.0,23.8 53.7,23.8 53.7,25.7 54.4,25.7 54.4,31.1 55.1,31.1 55.1,18.8 55.8,18.8 55.8,27.2 56.5,27.2 56.5,21.6 57.2,21.6 57.2,20.6 57.9,20.6 57.9,19.5 58.6,19.5 58.6,33.0 59.3,33.0 59.3,20.9 60.0,20.9 60.0,23.1 60.7,23.1 60.7,25.8 61.4,25.8 61.4,35.0 62.1,35.0 62.1,19.9 62.8,19.9 62.8,26.9 63.5,26.9 63.5,28.8 64.2,28.8 64.2,35.2 64.9,35.2 64.9,34.0 65.6,34.0 65.6,34.8 66.3,34.8 66.3,23.7 67.0,23.7 67.0,26.3 67.7,26.3 67.7,25.2 68.4,25.2 68.4,35.2 69.1,35.2 69.1,36.6 69.8,36.6 69.8,21.3 70.5,21.3 70.5,21.7 71.2,21.7 71.2,22.8 71.9,22.8 71.9,22.8 72.6,22.8 72.6,27.6 73.3,27.6 73.3,25.1 74.0,25.1 74.0,15.3 74.7,15.3 74.7,7.5 75.4,7.5 75.4,20.0 76.1,20.0 76.1,18.5 76.8,18.5 76.8,24.4 77.5,24.4 77.5,36.0 78.2,36.0 78.2,28.1 78.9,28.1 78.9,22.9 79.6,22.9 79.6,25.9 80.3,25.9 80.3,27.7 81.0,27.7 81.0,9.0 81.7,9.0 81.7,34.4 82.4,34.4 82.4,30.8 83.1,30.8 83.1,33.6 83.8,33.6 83.8,31.3 84.5,31.3 84.5,19.2 85.2,19.2 85.2,19.4 85.9,19.4 85.9,10.5 86.6,10.5 86.6,26.4 87.3,26.4 87.3,9.3 88.0,9.3 88.0,9.4 88.7,9.4 88.7,13.7 89.4,13.7 89.4,12.3 90.1,12.3 90.1,8.6 90.8,8.6 90.8,1.7 91.5,1.7 91.5,0.4 92.2,0.4 92.2,4.0 92.9,4.0 92.9,2.8 93.6,2.8 93.6,9.1 94.3,9.1 94.3,1.0 95.0,1.0 95.0,21.4 95.7,21.4 95.7,15.1 96.4,15.1 96.4,4.0 97.1,4.0 97.1,6.5 97.8,6.5 97.8,8.7 98.5,8.7 98.5,32.4" fill="none" stroke="#111" stroke-width="0.8" stroke-linejoin="miter"/>
</svg>
<div class="a" style="left:881.6px;top:188.0px;width:1.6px;height:3px;background:#93c497"></div>
<div class="a" style="left:894.4px;top:188.0px;width:1.6px;height:3px;background:#93c497"></div>
<div class="a" style="left:907.3px;top:188.0px;width:1.6px;height:3px;background:#93c497"></div>
<div class="a" style="left:920.1px;top:188.0px;width:1.6px;height:3px;background:#93c497"></div>
<div class="a" style="left:932.9px;top:188.0px;width:1.6px;height:3px;background:#93c497"></div>
<div class="a" style="left:945.2px;top:188.0px;width:2.6px;height:3px;background:#93c497"></div>
<div class="a" style="left:958.1px;top:188.0px;width:2.6px;height:3px;background:#93c497"></div>
<div class="a" style="left:970.9px;top:188.0px;width:2.6px;height:3px;background:#93c497"></div>
<div class="a" style="left:983.7px;top:188.0px;width:2.6px;height:3px;background:#93c497"></div>
<div class="a" style="left:996.6px;top:188.0px;width:2.6px;height:3px;background:#93c497"></div>
<div class="a" style="left:1009.4px;top:188.0px;width:2.6px;height:3px;background:#93c497"></div>
<div class="a" style="left:1022.2px;top:188.0px;width:2.6px;height:3px;background:#93c497"></div>
<div class="a" style="left:1035.1px;top:188.0px;width:2.6px;height:3px;background:#93c497"></div>
<div class="t ttl" style="left:876.5px;top:202px;font-size:9.5px;color:#222;transform:scaleX(1.1);transform-origin:0 0;letter-spacing:.2px">Wind Direction</div>
<svg class="a" style="left:884.6px;top:214.6px;overflow:visible" width="153.6" height="37.8" viewBox="0 0 153.6 37.8">
<line x1="2" y1="3.9" x2="151.6" y2="3.9" stroke="#4ea556" stroke-width="1" stroke-dasharray="2.6 3.9" stroke-dashoffset="-1.2"/>
<line x1="2" y1="7.8" x2="151.6" y2="7.8" stroke="#4ea556" stroke-width="1" stroke-dasharray="2.6 3.9" stroke-dashoffset="-1.2"/>
<line x1="2" y1="11.6" x2="151.6" y2="11.6" stroke="#4ea556" stroke-width="1" stroke-dasharray="2.6 3.9" stroke-dashoffset="-1.2"/>
<line x1="2" y1="15.4" x2="151.6" y2="15.4" stroke="#4ea556" stroke-width="1" stroke-dasharray="2.6 3.9" stroke-dashoffset="-1.2"/>
<line x1="2" y1="19.3" x2="151.6" y2="19.3" stroke="#4ea556" stroke-width="1" stroke-dasharray="2.6 3.9" stroke-dashoffset="-1.2"/>
<line x1="2" y1="23.2" x2="151.6" y2="23.2" stroke="#4ea556" stroke-width="1" stroke-dasharray="2.6 3.9" stroke-dashoffset="-1.2"/>
<line x1="2" y1="27.0" x2="151.6" y2="27.0" stroke="#4ea556" stroke-width="1" stroke-dasharray="2.6 3.9" stroke-dashoffset="-1.2"/>
<line x1="2" y1="30.9" x2="151.6" y2="30.9" stroke="#4ea556" stroke-width="1" stroke-dasharray="2.6 3.9" stroke-dashoffset="-1.2"/>
<line x1="2" y1="34.7" x2="151.6" y2="34.7" stroke="#4ea556" stroke-width="1" stroke-dasharray="2.6 3.9" stroke-dashoffset="-1.2"/>
<line x1="6.8" y1="2" x2="6.8" y2="35.8" stroke="#4ea556" stroke-width="0.9" stroke-dasharray="2.2 1.6"/>
<line x1="13.3" y1="2" x2="13.3" y2="35.8" stroke="#4ea556" stroke-width="0.9" stroke-dasharray="2.2 1.6"/>
<line x1="19.8" y1="2" x2="19.8" y2="35.8" stroke="#4ea556" stroke-width="0.9" stroke-dasharray="2.2 1.6"/>
<line x1="26.3" y1="2" x2="26.3" y2="35.8" stroke="#4ea556" stroke-width="0.9" stroke-dasharray="2.2 1.6"/>
<line x1="32.8" y1="2" x2="32.8" y2="35.8" stroke="#4ea556" stroke-width="0.9" stroke-dasharray="2.2 1.6"/>
<line x1="39.3" y1="2" x2="39.3" y2="35.8" stroke="#4ea556" stroke-width="0.9" stroke-dasharray="2.2 1.6"/>
<line x1="45.8" y1="2" x2="45.8" y2="35.8" stroke="#4ea556" stroke-width="0.9" stroke-dasharray="2.2 1.6"/>
<line x1="52.3" y1="2" x2="52.3" y2="35.8" stroke="#4ea556" stroke-width="0.9" stroke-dasharray="2.2 1.6"/>
<line x1="58.8" y1="2" x2="58.8" y2="35.8" stroke="#4ea556" stroke-width="0.9" stroke-dasharray="2.2 1.6"/>
<line x1="65.3" y1="2" x2="65.3" y2="35.8" stroke="#4ea556" stroke-width="0.9" stroke-dasharray="2.2 1.6"/>
<line x1="71.8" y1="2" x2="71.8" y2="35.8" stroke="#4ea556" stroke-width="0.9" stroke-dasharray="2.2 1.6"/>
<line x1="78.3" y1="2" x2="78.3" y2="35.8" stroke="#4ea556" stroke-width="0.9" stroke-dasharray="2.2 1.6"/>
<line x1="84.8" y1="2" x2="84.8" y2="35.8" stroke="#4ea556" stroke-width="0.9" stroke-dasharray="2.2 1.6"/>
<line x1="91.3" y1="2" x2="91.3" y2="35.8" stroke="#4ea556" stroke-width="0.9" stroke-dasharray="2.2 1.6"/>
<line x1="97.8" y1="2" x2="97.8" y2="35.8" stroke="#4ea556" stroke-width="0.9" stroke-dasharray="2.2 1.6"/>
<line x1="104.3" y1="2" x2="104.3" y2="35.8" stroke="#4ea556" stroke-width="0.9" stroke-dasharray="2.2 1.6"/>
<line x1="110.8" y1="2" x2="110.8" y2="35.8" stroke="#4ea556" stroke-width="0.9" stroke-dasharray="2.2 1.6"/>
<line x1="117.3" y1="2" x2="117.3" y2="35.8" stroke="#4ea556" stroke-width="0.9" stroke-dasharray="2.2 1.6"/>
<line x1="123.8" y1="2" x2="123.8" y2="35.8" stroke="#4ea556" stroke-width="0.9" stroke-dasharray="2.2 1.6"/>
<line x1="130.3" y1="2" x2="130.3" y2="35.8" stroke="#4ea556" stroke-width="0.9" stroke-dasharray="2.2 1.6"/>
<line x1="136.8" y1="2" x2="136.8" y2="35.8" stroke="#4ea556" stroke-width="0.9" stroke-dasharray="2.2 1.6"/>
<line x1="143.3" y1="2" x2="143.3" y2="35.8" stroke="#4ea556" stroke-width="0.9" stroke-dasharray="2.2 1.6"/>
<line x1="149.8" y1="2" x2="149.8" y2="35.8" stroke="#4ea556" stroke-width="0.9" stroke-dasharray="2.2 1.6"/>
<rect x="0.5" y="0.5" width="152.6" height="36.8" fill="none" stroke="#4aa052" stroke-width="1"/>
<line x1="0" y1="36.9" x2="153.6" y2="36.9" stroke="#2f9037" stroke-width="1.8"/>
<polyline points="0.4,26.4 1.2,26.4 1.2,27.6 2.0,27.6 2.0,31.6 2.8,31.6 2.8,26.5 3.6,26.5 3.6,27.0 4.4,27.0 4.4,27.9 5.2,27.9 5.2,23.4 6.0,23.4 6.0,32.4 6.8,32.4 6.8,32.7 7.6,32.7 7.6,33.0 8.4,33.0 8.4,31.6 9.2,31.6 9.2,32.0 10.0,32.0 10.0,31.6 10.8,31.6 10.8,33.0 11.6,33.0 11.6,32.8 12.4,32.8 12.4,31.5 13.2,31.5 13.2,21.8 14.0,21.8 14.0,21.8 14.8,21.8 14.8,20.5 15.6,20.5 15.6,20.4 16.4,20.4 16.4,18.5 17.2,18.5 17.2,18.0 18.0,18.0 18.0,20.0 18.8,20.0 18.8,18.1 19.6,18.1 19.6,18.7 20.4,18.7 20.4,18.9 21.2,18.9 21.2,18.0 22.0,18.0 22.0,19.8 22.8,19.8 22.8,19.7 23.6,19.7 23.6,21.3 24.4,21.3 24.4,20.0 25.2,20.0 25.2,20.5 26.0,20.5 26.0,19.9 26.8,19.9 26.8,20.5 27.6,20.5 27.6,19.7 28.4,19.7 28.4,19.0 29.2,19.0 29.2,21.9 30.0,21.9 30.0,21.9 30.8,21.9 30.8,21.3 31.6,21.3 31.6,20.7 32.4,20.7 32.4,19.2 33.2,19.2 33.2,18.8 34.0,18.8 34.0,19.1 34.8,19.1 34.8,18.2 35.6,18.2 35.6,21.0 36.4,21.0 36.4,19.5 37.2,19.5 37.2,21.3 38.0,21.3 38.0,19.4 38.8,19.4 38.8,21.7 39.6,21.7 39.6,21.3 40.4,21.3 40.4,17.9 41.2,17.9 41.2,18.7 42.0,18.7 42.0,21.5 42.8,21.5 42.8,19.8 43.6,19.8 43.6,21.8 44.4,21.8 44.4,19.5 45.2,19.5 45.2,18.2 46.0,18.2 46.0,20.4 46.8,20.4 46.8,21.0 47.6,21.0 47.6,19.0 48.4,19.0 48.4,18.2 49.2,18.2 49.2,19.2 50.0,19.2 50.0,21.8 50.8,21.8 50.8,20.9 51.6,20.9 51.6,18.4 52.4,18.4 52.4,18.9 53.2,18.9 53.2,18.3 54.0,18.3 54.0,18.1 54.8,18.1 54.8,21.1 55.6,21.1 55.6,11.8 56.4,11.8 56.4,21.4 57.2,21.4 57.2,18.6 58.0,18.6 58.0,12.2 58.8,12.2 58.8,25.7 59.6,25.7 59.6,10.7 60.4,10.7 60.4,23.5 61.2,23.5 61.2,10.3 62.0,10.3 62.0,17.9 62.8,17.9 62.8,12.7 63.6,12.7 63.6,14.1 64.4,14.1 64.4,31.7 65.2,31.7 65.2,27.5 66.0,27.5 66.0,15.0 66.8,15.0 66.8,29.5 67.6,29.5 67.6,12.7 68.4,12.7 68.4,17.3 69.2,17.3 69.2,28.8 70.0,28.8 70.0,23.4 70.8,23.4 70.8,9.9 71.6,9.9 71.6,32.1 72.4,32.1 72.4,12.7 73.2,12.7 73.2,13.9 74.0,13.9 74.0,26.7 74.8,26.7 74.8,15.6 75.6,15.6 75.6,12.3 76.4,12.3 76.4,5.6 77.2,5.6 77.2,6.1 78.0,6.1 78.0,20.9 78.8,20.9 78.8,10.7 79.6,10.7 79.6,21.4 80.4,21.4 80.4,14.6 81.2,14.6 81.2,17.0 82.0,17.0 82.0,32.2 82.8,32.2 82.8,17.9 83.6,17.9 83.6,20.6 84.4,20.6 84.4,29.4 85.2,29.4 85.2,8.9 86.0,8.9 86.0,8.0 86.8,8.0 86.8,30.7 87.6,30.7 87.6,27.9 88.4,27.9 88.4,10.9 89.2,10.9 89.2,9.1 90.0,9.1 90.0,25.6 90.8,25.6 90.8,12.9 91.6,12.9 91.6,6.2 92.4,6.2 92.4,13.0 93.2,13.0 93.2,12.3 94.0,12.3 94.0,9.8 94.8,9.8 94.8,8.2 95.6,8.2 95.6,5.3 96.4,5.3 96.4,4.7 97.2,4.7 97.2,13.1 98.0,13.1" fill="none" stroke="#111" stroke-width="0.8" stroke-linejoin="miter"/>
</svg>
<div class="a" style="left:881.2px;top:264.1px;width:1.6px;height:3px;background:#93c497"></div>
<div class="a" style="left:894.0px;top:264.1px;width:1.6px;height:3px;background:#93c497"></div>
<div class="a" style="left:906.9px;top:264.1px;width:1.6px;height:3px;background:#93c497"></div>
<div class="a" style="left:919.7px;top:264.1px;width:1.6px;height:3px;background:#93c497"></div>
<div class="a" style="left:932.5px;top:264.1px;width:1.6px;height:3px;background:#93c497"></div>
<div class="a" style="left:944.9px;top:264.1px;width:2.6px;height:3px;background:#93c497"></div>
<div class="a" style="left:957.7px;top:264.1px;width:2.6px;height:3px;background:#93c497"></div>
<div class="a" style="left:970.5px;top:264.1px;width:2.6px;height:3px;background:#93c497"></div>
<div class="a" style="left:983.3px;top:264.1px;width:2.6px;height:3px;background:#93c497"></div>
<div class="a" style="left:996.2px;top:264.1px;width:2.6px;height:3px;background:#93c497"></div>
<div class="a" style="left:1009.0px;top:264.1px;width:2.6px;height:3px;background:#93c497"></div>
<div class="a" style="left:1021.8px;top:264.1px;width:2.6px;height:3px;background:#93c497"></div>
<div class="a" style="left:1034.7px;top:264.1px;width:2.6px;height:3px;background:#93c497"></div>
<div class="t rp" style="left:872px;top:281.9px">Setpoint Angle</div>
<div class="t" style="left:978.5px;top:283.6px;font-size:10px;color:#222;letter-spacing:1px">138</div>
<div class="t rp" style="left:872px;top:297.0px">Wind Speed</div>
<div class="t" style="left:978.5px;top:298.7px;font-size:10px;color:#222;letter-spacing:1px">2m/s</div>
<div class="t rp" style="left:872px;top:311.3px">Wind Direction</div>
<div class="t" style="left:978.5px;top:313.0px;font-size:10px;color:#222;letter-spacing:1px">333</div>
<div class="t rp" style="left:872px;top:327.7px">Work Mode</div>
<div class="a" style="left:955px;top:325.2px;width:69px;height:15.5px;border:1.5px solid #333;background:#fdf9f9"></div>
<div class="t" style="left:975.5px;top:330px;font-size:11px;color:#222">Auto</div>
<div class="t rp" style="left:872px;top:348px">High Wind Alarm</div>
<div class="t rp" style="left:872px;top:368px">WindSpeed Sensor Failure</div>
<div class="t rp" style="left:872.5px;top:383.3px">WindDirection Sensor Failure</div>
<div class="a" style="left:1023.3px;top:369.9px;width:45.7px;height:9.9px;background:#00ee00"></div>
<div class="a" style="left:1023.3px;top:385.4px;width:45.7px;height:9.3px;background:#00ee00"></div>
<div class="t" style="left:1028.6px;top:370.3px;font-size:9px;font-weight:bold;color:#111;letter-spacing:0px;transform:scaleX(1.14);transform-origin:0 0;-webkit-text-stroke:.3px #111">normal</div>
<div class="t" style="left:1028.6px;top:385.6px;font-size:9px;font-weight:bold;color:#111;letter-spacing:0px;transform:scaleX(1.14);transform-origin:0 0;-webkit-text-stroke:.3px #111">normal</div>
<div class="a" style="left:866px;top:400.5px;width:211px;height:1px;background:#e2e4e6"></div>
<div class="btn" style="left:883px;top:421.1px;width:62.8px;height:17.3px"></div>
<div class="t act" style="left:889px;top:426.1px">ACTIVATE</div>
<div class="t mode" style="left:954.6px;top:424.9px">Wind Mode</div>
<div class="btn" style="left:883px;top:442.5px;width:62.8px;height:17.3px"></div>
<div class="t act" style="left:889px;top:447.5px">ACTIVATE</div>
<div class="t mode" style="left:954.6px;top:446.3px">Rain Mode</div>
<div class="btn" style="left:883px;top:463.5px;width:62.8px;height:17.3px"></div>
<div class="t act" style="left:889px;top:468.5px">ACTIVATE</div>
<div class="t mode" style="left:954.6px;top:467.8px">Auto Mode</div>
<div class="btn" style="left:883px;top:485.1px;width:62.8px;height:17.3px"></div>
<div class="t act" style="left:889px;top:490.1px">ACTIVATE</div>
<div class="t mode" style="left:954.6px;top:490.4px">Maintenance Mode</div>
<div class="btn" style="left:883px;top:506.1px;width:62.8px;height:17.3px"></div>
<div class="t act" style="left:889px;top:511.1px">ACTIVATE</div>
<div class="t mode" style="left:954.6px;top:510.1px">Manual Mode</div>
<div class="btn" style="left:883px;top:527.5px;width:62.8px;height:17.3px"></div>
<div class="t act" style="left:889px;top:532.5px">ACTIVATE</div>
<div class="t mode" style="left:954.6px;top:532.8px">Cleaning Mode</div>
</body></html>
